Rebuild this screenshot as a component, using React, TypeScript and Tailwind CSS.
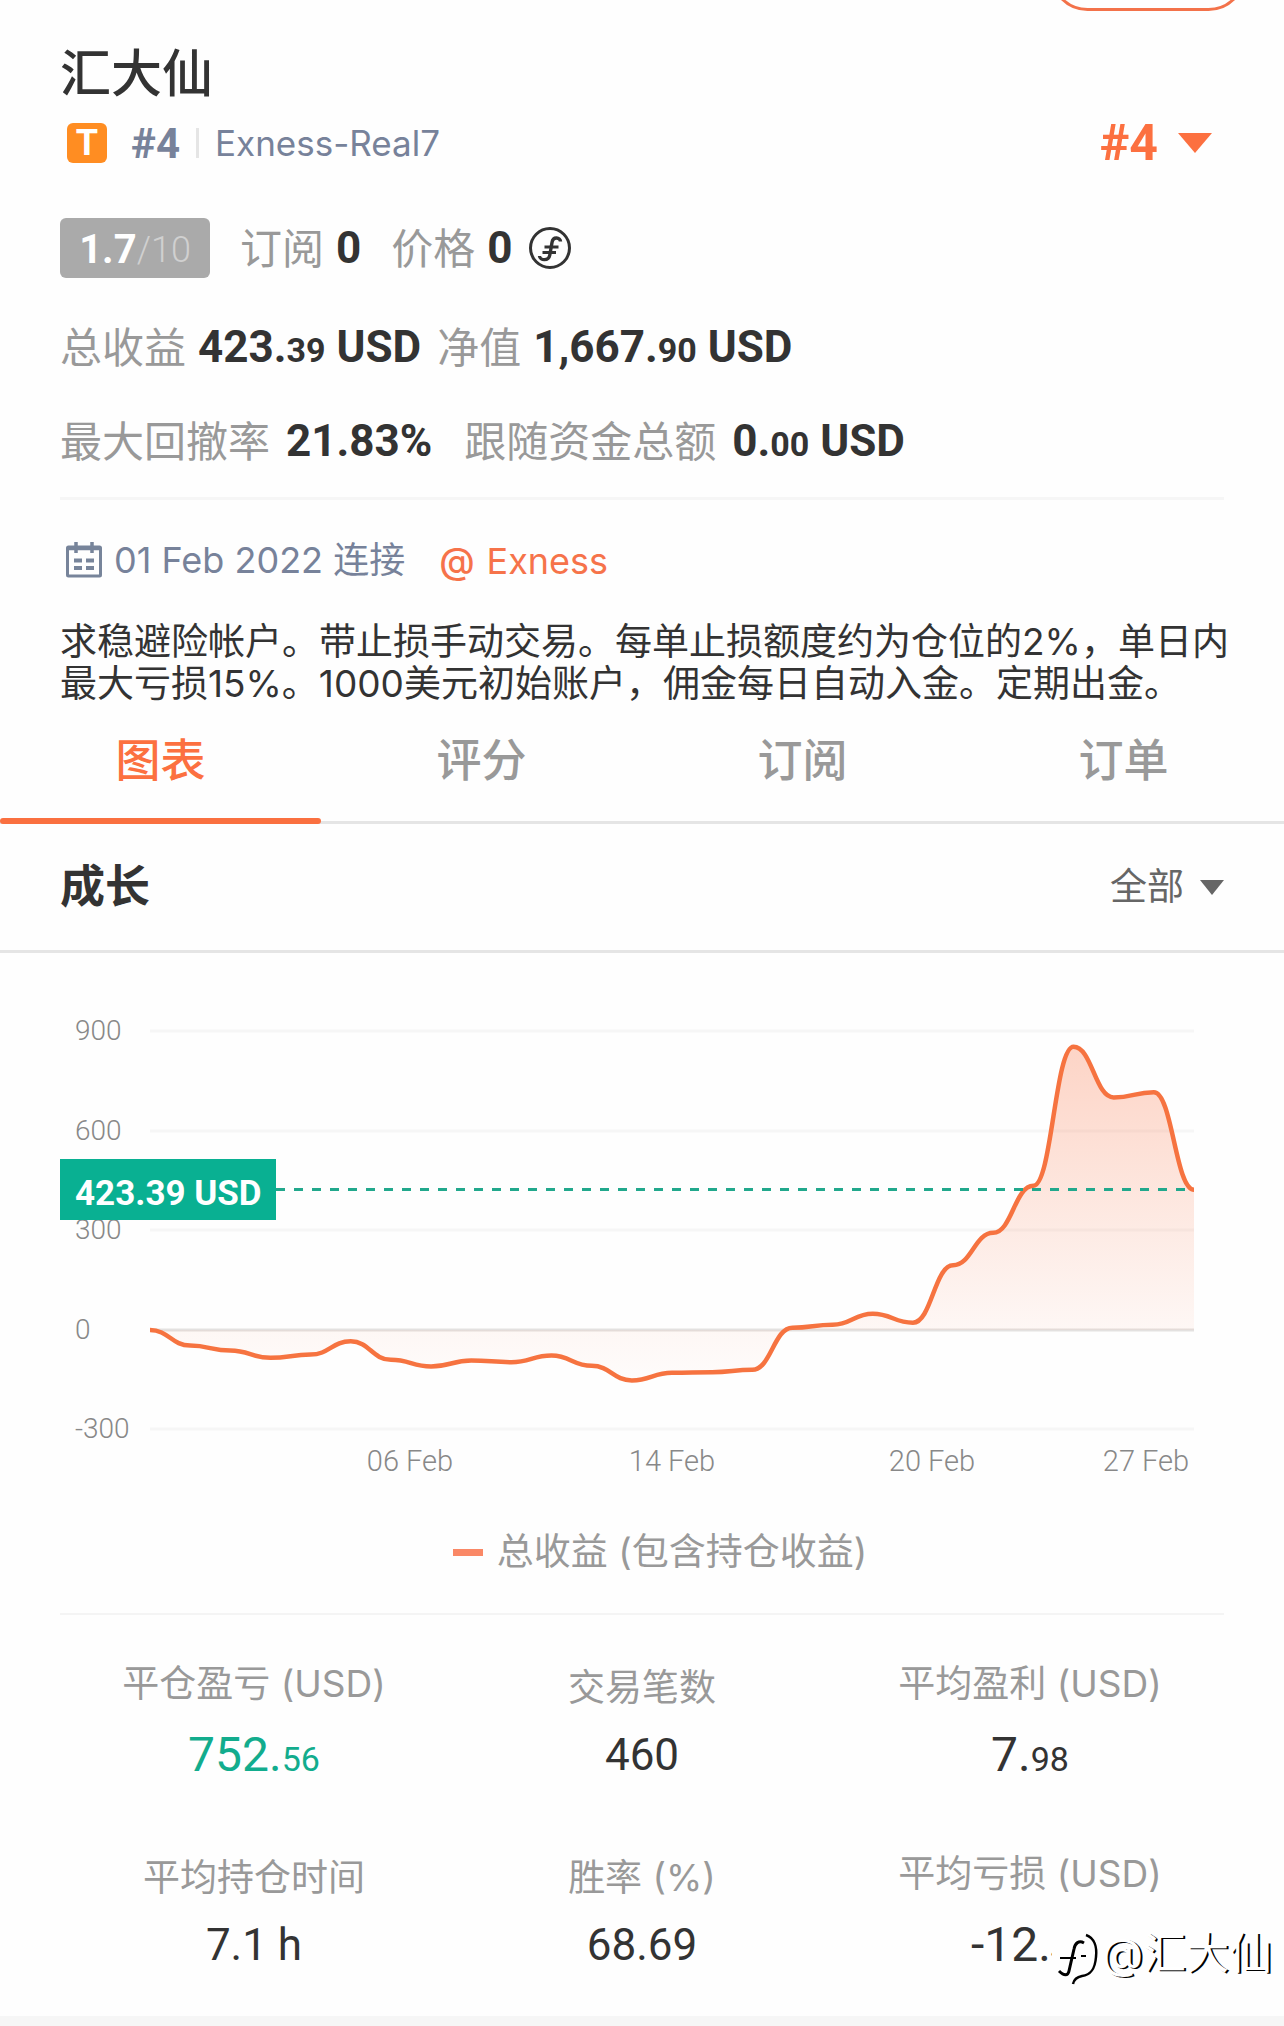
import React, { useState } from 'react';

const TABS = ['图表', '评分', '订阅', '订单'];
const RANGES = ['全部'];

const GRID = [
  { value: '900', y: 40 },
  { value: '600', y: 140 },
  { value: '300', y: 239 },
  { value: '0', y: 339 },
  { value: '-300', y: 438 },
];

const DATES = [
  { label: '06 Feb', x: 350 },
  { label: '14 Feb', x: 612 },
  { label: '20 Feb', x: 872 },
  { label: '27 Feb', x: 1086 },
];

// Daily total profit in USD
const PROFIT = [
  0, -47, -62, -84, -74, -34, -90, -110, -92, -97, -77, -108, -152, -129, -127,
  -120, 7, 16, 49, 22, 195, 293, 435, 854, 701, 717, 423,
];

const ZERO_Y = 339;

function profitPath() {
  const step = (1134 - 90) / (PROFIT.length - 1);
  const points = PROFIT.map((value, i) => ({
    x: 90 + i * step,
    y: ZERO_Y - value * 0.3317,
  }));
  return points.reduce((path, p, i) => {
    if (i === 0) return `M${p.x} ${p.y}`;
    const prev = points[i - 1];
    const c = step * 0.46;
    return `${path} C${prev.x + c} ${prev.y} ${p.x - c} ${p.y} ${p.x} ${p.y}`;
  }, '');
}

interface AmountProps {
  whole: string;
  cents: string;
  unit?: string;
}

function Amount({ whole, cents, unit }: AmountProps) {
  return (
    <span className="font-[Roboto,sans-serif] text-[44px] font-bold text-[#333]">
      {whole}.<span className="text-[34px]">{cents}</span>
      {unit && ` ${unit}`}
    </span>
  );
}

function CoinIcon() {
  return (
    <svg className="size-[42px]" viewBox="0 0 42 42" fill="none" stroke="#333" aria-hidden="true">
      <circle cx="21" cy="21" r="19.5" strokeWidth="3" />
      <path
        d="M31.500 14.500c0-4-7.500-5.500-8.500 1l-2.200 12.500c-1.200 6.500-10 5.500-10.300 1"
        strokeWidth="3.400"
      />
      <path d="M15.500 20H29.500M13.500 25.500h13.500" strokeWidth="3" />
    </svg>
  );
}

function CalendarIcon() {
  return (
    <svg className="size-9" viewBox="0 0 36 36" fill="none" stroke="#77849a" aria-hidden="true">
      <rect x="1.500" y="5" width="33" height="29" rx="1" strokeWidth="3" />
      <path d="M10 0v11M26 0v11" strokeWidth="3.500" />
      <path d="M1 6.500h34" strokeWidth="3.500" />
      <path d="M8 18.500h8M20 18.500h8M8 26h8M20 26h8" strokeWidth="4" />
    </svg>
  );
}

function ProfitChart() {
  const line = profitPath();
  return (
    <svg
      className="h-auto w-full font-[Roboto,sans-serif]"
      viewBox="0 0 1164 490"
      role="img"
      aria-label="总收益"
    >
      <defs>
        <linearGradient id="profit" gradientUnits="userSpaceOnUse" x1="0" y1="50" x2="0" y2="400">
          <stop offset="0" stopColor="#fa7040" stopOpacity="0.3" />
          <stop offset="0.82" stopColor="#fa7040" stopOpacity="0.05" />
          <stop offset="1" stopColor="#fa7040" stopOpacity="0.01" />
        </linearGradient>
      </defs>

      {GRID.map((row) => (
        <g key={row.value}>
          <text x="15" y={row.y + 9} fontSize="28" fontWeight="300" fill="#888">
            {row.value}
          </text>
          <path
            d={`M90 ${row.y}H1134`}
            stroke={row.value === '0' ? '#e3e1e0' : '#f6f6f6'}
            strokeWidth="3"
          />
        </g>
      ))}

      <path d={`${line} V${ZERO_Y} H90 Z`} fill="url(#profit)" />
      <path d={line} fill="none" stroke="#f67340" strokeWidth="4.500" />

      <path d="M216 198.500H1134" stroke="#21a88c" strokeWidth="3" strokeDasharray="9 9" />
      <rect x="0" y="168" width="216" height="61" fill="#09b092" />
      <text x="15" y="214" fontSize="35" fontWeight="700" fill="#fff">
        423.39 USD
      </text>

      {DATES.map((date) => (
        <text
          key={date.label}
          x={date.x}
          y="480"
          fontSize="29"
          fontWeight="300"
          fill="#888"
          textAnchor="middle"
        >
          {date.label}
        </text>
      ))}
    </svg>
  );
}

interface StatProps {
  label: string;
  whole: string;
  cents?: string;
  positive?: boolean;
}

function Stat({ label, whole, cents, positive }: StatProps) {
  return (
    <div className={`flex flex-col items-center ${cents ? 'gap-4' : 'gap-3 pt-1'}`}>
      <dt className="text-[37px] leading-[54px] text-[#999]">{label}</dt>
      <dd
        className={`font-[Roboto,sans-serif] leading-[56px] ${
          cents ? 'text-[48px]' : 'text-[44px]'
        } ${positive ? 'text-[#12ac8d]' : 'text-[#333]'}`}
      >
        {whole}
        {cents && (
          <>
            .<span className="text-[34px]">{cents}</span>
          </>
        )}
      </dd>
    </div>
  );
}

function Watermark() {
  return (
    <div className="absolute right-3 bottom-[42px] flex text-white">
      <svg className="h-[56px] w-[50px]" viewBox="0 0 50 56" fill="none" aria-hidden="true">
        <path d="M1 1h36c13 4 15 38 2 45l-12 9L1 48Z" fill="#fefefe" />
        <path
          d="M35 5c9 3 11 13 10 22-1 12-5 18-14 19-5 1-8 3-9 8"
          stroke="#000"
          strokeWidth="2.500"
        />
        <path d="M33 13c-5-3-9 0-10 6l-5 22c-1 5-5 5-10 0" stroke="#000" strokeWidth="3" />
        <path d="M9 28h16M30 26h5" stroke="#000" strokeWidth="2" />
      </svg>
      <span className="text-[43px] leading-[46px] [text-shadow:2px_1px_0_#000]">@汇大仙</span>
    </div>
  );
}

export default function App() {
  const [activeTab, setActiveTab] = useState('图表');
  const [range, setRange] = useState('全部');

  return (
    <main
      lang="zh-CN"
      className="relative min-h-screen overflow-hidden bg-[#fefefe] font-[Inter,'Noto_Sans_CJK_SC',sans-serif] text-[#333]"
    >
      <div className="flex h-[11px] justify-end overflow-hidden pr-[38px]">
        <button
          aria-label="关注"
          className="-mt-[64px] h-[75px] w-[196px] rounded-full border-3 border-[#f3724a]"
        />
      </div>

      {/* Account */}
      <header className="px-[60px] pt-[26px]">
        <h1 className="text-[51px] leading-[74px] font-medium">汇大仙</h1>
        <div className="flex h-16 items-center">
          <span className="ml-[7px] flex size-10 items-center justify-center rounded-md bg-[#ff8d22] font-[Roboto,sans-serif] text-[36px] font-bold text-white">
            T
          </span>
          <span className="ml-6 font-[Roboto,sans-serif] text-[42px] font-bold text-[#77829a]">
            #4
          </span>
          <span className="mx-4 h-[30px] w-[3px] bg-[#e5e5e5]" />
          <span className="text-[35px] text-[#77829a]">Exness-Real7</span>
          <button className="mr-3 ml-auto flex items-center gap-5 font-[Roboto,sans-serif] text-[50px] font-bold text-[#fc7040]">
            #4
            <svg className="h-5 w-[34px]" viewBox="0 0 34 20" fill="currentColor" aria-hidden="true">
              <path d="M0 0h34L17 20Z" />
            </svg>
          </button>
        </div>

        <div className="mt-[43px] flex h-[60px] items-center text-[42px] text-[#999]">
          <span className="flex h-[60px] w-[150px] items-center justify-center rounded-md bg-[#aaa] pt-1 font-[Roboto,sans-serif] text-[40px] font-bold text-white">
            1.7<span className="text-[36px] font-light text-[#d0d0d0]">/10</span>
          </span>
          <span className="ml-[30px]">订阅</span>
          <b className="ml-3 font-[Roboto,sans-serif] text-[44px] text-[#333]">0</b>
          <span className="ml-[30px]">价格</span>
          <b className="mr-4 ml-3 font-[Roboto,sans-serif] text-[44px] text-[#333]">0</b>
          <CoinIcon />
        </div>

        <div className="mt-[39px] flex h-[60px] items-center gap-3 text-[42px] text-[#999]">
          <span>总收益</span>
          <Amount whole="423" cents="39" unit="USD" />
          <span className="ml-1">净值</span>
          <Amount whole="1,667" cents="90" unit="USD" />
        </div>

        <div className="mt-[34px] flex h-[60px] items-center gap-4 text-[42px] text-[#999]">
          <span>最大回撤率</span>
          <b className="font-[Roboto,sans-serif] text-[44px] text-[#333]">21.83%</b>
          <span className="ml-4">跟随资金总额</span>
          <Amount whole="0" cents="00" unit="USD" />
        </div>

        <hr className="mt-[26px] border-t-3 border-[#f6f6f6]" />

        <div className="mt-[34px] flex h-[52px] items-center pl-1.5 text-[36px] text-[#77829a]">
          <CalendarIcon />
          <span className="ml-3">01 Feb 2022 连接</span>
          <a href="#exness" className="ml-[34px] flex gap-3 pt-0.5 text-[#f6734a]">
            <span className="font-medium">@</span>
            Exness
          </a>
        </div>
      </header>

      <p className="pt-[35px] pr-12 pl-[60px] text-[37px] leading-[42px]">
        求稳避险帐户。带止损手动交易。每单止损额度约为仓位的2%，单日内最大亏损15%。1000美元初始账户，佣金每日自动入金。定期出金。
      </p>

      {/* Tabs */}
      <nav className="mt-3 grid grid-cols-4" role="tablist">
        {TABS.map((tab) => (
          <button
            key={tab}
            role="tab"
            aria-selected={tab === activeTab}
            onClick={() => setActiveTab(tab)}
            className={`relative h-[107px] border-b-3 border-[#e5e5e5] pb-4 text-[45px] font-medium ${
              tab === activeTab ? 'text-[#fc7040]' : 'text-[#999]'
            }`}
          >
            {tab}
            {tab === activeTab && (
              <span className="absolute inset-x-0 -bottom-[3px] h-1.5 rounded-full bg-[#fa7040]" />
            )}
          </button>
        ))}
      </nav>

      {/* Growth */}
      <section>
        <div className="flex h-[129px] items-center justify-between border-b-3 border-[#e5e5e5] px-[60px]">
          <h2 className="text-[45px] font-bold">成长</h2>
          <label className="flex items-center gap-4 text-[37px] text-[#666]">
            <select
              aria-label="时间范围"
              value={range}
              onChange={(e) => setRange(e.target.value)}
              className="appearance-none bg-transparent"
            >
              {RANGES.map((item) => (
                <option key={item}>{item}</option>
              ))}
            </select>
            <svg className="h-[15px] w-6" viewBox="0 0 24 15" fill="currentColor" aria-hidden="true">
              <path d="M0 0h24L12 15Z" />
            </svg>
          </label>
        </div>

        <div className="px-[60px] pt-[38px]">
          <ProfitChart />
          <div className="mt-11 flex items-center justify-center gap-3.5 pl-9 text-[37px] leading-[54px] text-[#999]">
            <span className="h-[7px] w-[30px] bg-[#fa8866]" />
            总收益 (包含持仓收益)
          </div>
          <hr className="mt-[34px] border-t-2 border-[#f4f4f4]" />
        </div>

        <dl className="grid grid-cols-3 gap-y-[60px] px-[60px] pt-[42px] pb-[39px]">
          <Stat label="平仓盈亏 (USD)" whole="752" cents="56" positive />
          <Stat label="交易笔数" whole="460" />
          <Stat label="平均盈利 (USD)" whole="7" cents="98" />
          <Stat label="平均持仓时间" whole="7.1 h" />
          <Stat label="胜率 (%)" whole="68.69" />
          <Stat label="平均亏损 (USD)" whole="-12" cents="40" />
        </dl>
      </section>

      <Watermark />
      <div className="h-3 bg-[#f6f6f6]" />
    </main>
  );
}
